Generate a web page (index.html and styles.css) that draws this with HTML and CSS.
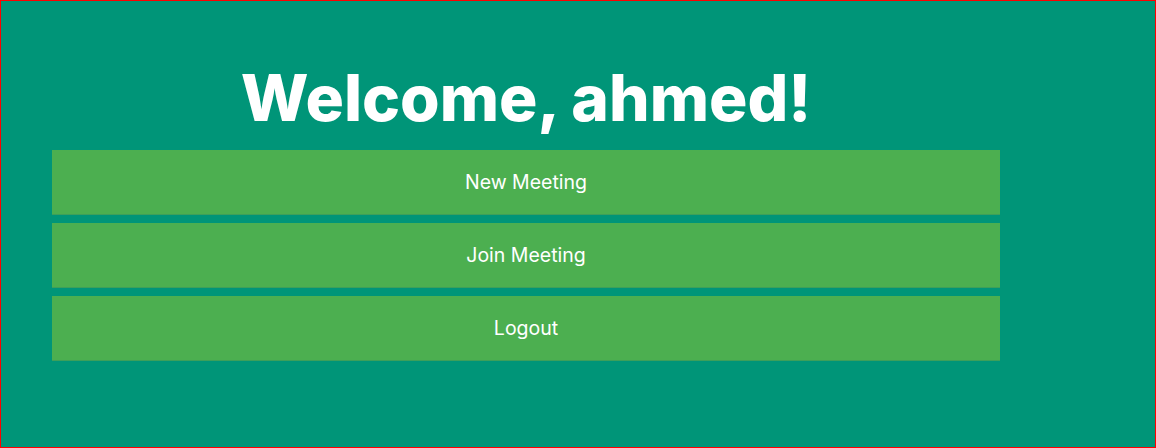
FILE: index.html
```html
<!DOCTYPE html>
<html>
<head>
<meta charset="utf-8">
<link rel="stylesheet" href="styles.css">
</head>
<body>
<div class="page">
  <div class="panel">
    <h1 class="title">Welcome, ahmed!</h1>
    <button class="btn">New Meeting</button>
    <button class="btn">Join Meeting</button>
    <button class="btn">Logout</button>
  </div>
</div>
</body>
</html>
```
FILE: styles.css
```css
html, body {
  margin: 0;
  padding: 0;
}
.page {
  box-sizing: border-box;
  width: 1156px;
  height: 448px;
  border: 1px solid #ff0000;
  background: #009578;
  padding: 58px 0 0 51px;
  font-family: Inter, "Open Sans", sans-serif;
}
.panel {
  width: 948px;
  display: flex;
  flex-direction: column;
  gap: 8px;
}
.title {
  margin: 0 0 6px 0;
  height: 77px;
  text-align: center;
  color: #fff;
  font-size: 64px;
  font-weight: 800;
  line-height: 77px;
}
.btn {
  display: block;
  box-sizing: border-box;
  width: 100%;
  height: 65px;
  border: none;
  border-bottom: 1px solid #3e9f5a;
  background: #4caf50;
  color: #fff;
  font-family: Inter, "Open Sans", sans-serif;
  font-size: 19.5px;
  font-weight: 400;
  text-align: center;
  padding: 0;
}
```
